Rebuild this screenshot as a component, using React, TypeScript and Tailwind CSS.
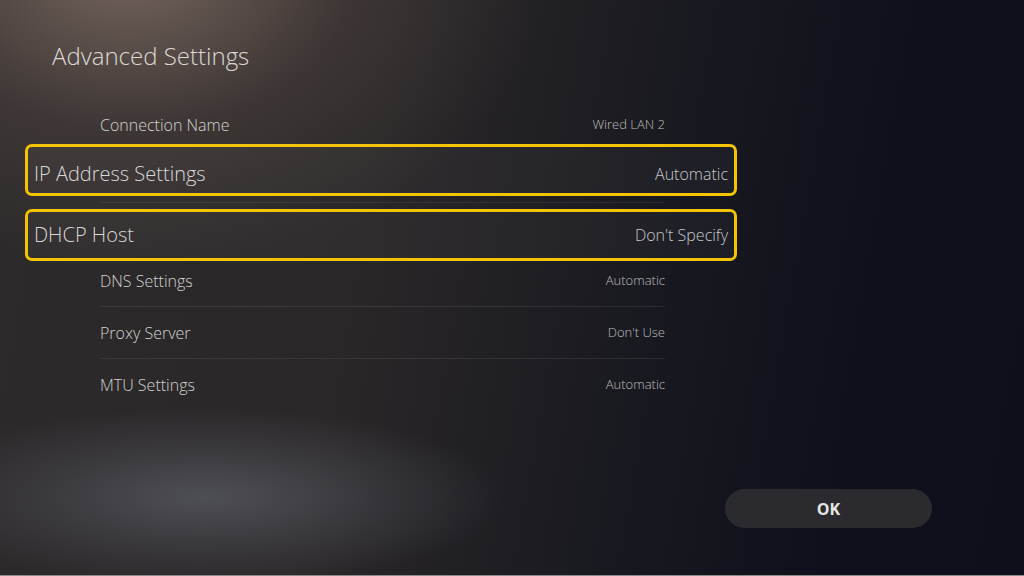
import React from 'react';

type Item = { label: string; value: string };

const FONT = "font-['Open_Sans','Noto_Sans',sans-serif]";

// normal list row: label at x=100, value ends at x=665
function Row({ item, className }: { item: Item; className: string }) {
    return (
        <div className={`flex items-center justify-between ${className}`}>
            <span className="text-[16px] font-light text-[#d2d2d2]">{item.label}</span>
            <span className="text-[13px] font-light text-[#bdbdbd]">{item.value}</span>
        </div>
    );
}

// focused row, yellow outline
function FocusRow({ item, className = '' }: { item: Item; className?: string }) {
    return (
        <div className={`flex h-[52px] items-center justify-between rounded-[7px] border-[3px] border-[#f5c400] bg-white/[0.03] pl-[6px] pr-[6px] ${className}`}>
            <span className="text-[20px] font-light text-[#d8d8d8]">{item.label}</span>
            <span className="text-[16px] font-light text-[#c8c8c8]">{item.value}</span>
        </div>
    );
}

export default function App() {
    return (
        <div className={`${FONT} flex h-[576px] w-full flex-col overflow-hidden border-b border-[#8a8a8a] bg-[radial-gradient(ellipse_300px_90px_at_205px_497px,rgba(80,81,88,0.95),rgba(72,72,80,0.5)_55%,rgba(60,60,66,0)_100%),radial-gradient(ellipse_420px_310px_at_130px_-40px,rgba(165,140,125,0.62),rgba(110,92,84,0.25)_55%,rgba(90,80,75,0)_100%),linear-gradient(100deg,#2d2a2b_0%,#2a2728_36%,#1a1a21_60%,#0e111b_82%,#0d101a_100%)]`}>
            <h1 className="ml-[52px] mt-[40px] text-[24px] font-light leading-[32px] text-[#dcd9d7]">Advanced Settings</h1>

            <div className="ml-[25px] w-[712px]">
                <div className="px-[72px] pl-[75px]">
                    <Row item={{ label: 'Connection Name', value: 'Wired LAN 2' }} className="mt-[33px] h-[39px]" />
                </div>
                <FocusRow item={{ label: 'IP Address Settings', value: 'Automatic' }} className="pt-[7px]" />
                <div className="my-[6px] ml-[75px] mr-[72px] h-px bg-white/[0.07]" />
                <FocusRow item={{ label: 'DHCP Host', value: "Don't Specify" }} />
                <div className="ml-[75px] mr-[72px]">
                    <Row item={{ label: 'DNS Settings', value: 'Automatic' }} className="h-[46px] pb-[6px] border-b border-white/[0.08]" />
                    <Row item={{ label: 'Proxy Server', value: "Don't Use" }} className="h-[52px] border-b border-white/[0.08]" />
                    <Row item={{ label: 'MTU Settings', value: 'Automatic' }} className="h-[52px]" />
                </div>
            </div>

            <div className="mt-[78px] flex justify-end pr-[92px]">
                <button className="h-[39px] w-[207px] rounded-full bg-[#2b2a2e] text-[16px] font-bold text-[#e6e6e6]">OK</button>
            </div>
        </div>
    );
}
